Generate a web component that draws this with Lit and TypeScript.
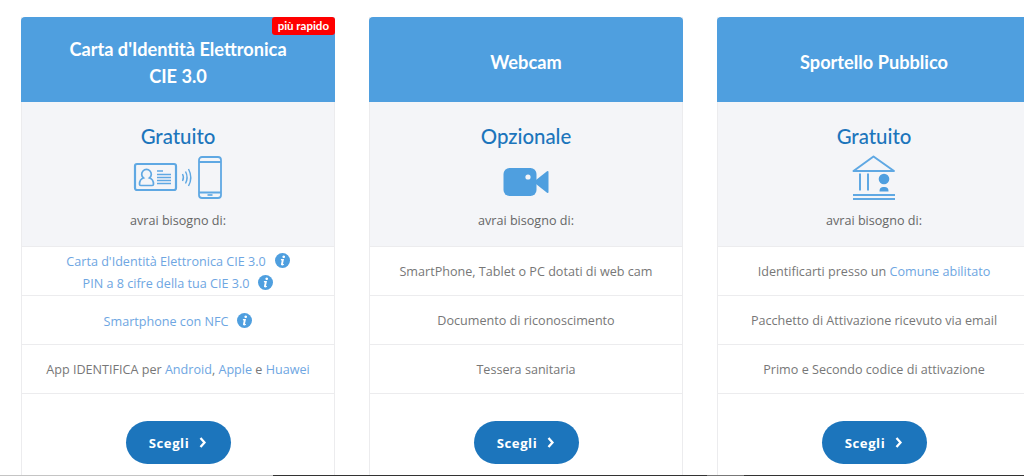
import { LitElement, html, css, svg } from "lit";
import { customElement } from "lit/decorators.js";

const info = html`<svg class="info" viewBox="0 0 16 16"><circle cx="8" cy="8" r="8" fill="#4f9fdf"/><path d="M9.300 2.600a1.400 1.400 0 1 1-.01 0zM6.300 6.500h3.300l-1.100 5c-.1.500.4.400 1.100 0l-.1 1.100c-1.300.9-3.400 1-3.100-.9l.8-3.700-.9-.3z" fill="#fff"/></svg>`;

const cieIcon = svg`<svg class="ic" width="90" height="46" viewBox="0 0 90 46" fill="none" stroke="#5fa8e3" stroke-width="1.800">
<rect x="2" y="9" width="41" height="26" rx="2" stroke-width="2.200"/>
<path d="M10.500 23a4.800 4.800 0 1 1 6 0c3.500 1 4 3.500 4 6.200 0 .8-.5 1.300-1.300 1.300H7.800c-.8 0-1.300-.5-1.300-1.300 0-2.700.5-5.200 4-6.200z" stroke-width="1.700"/>
<path d="M24 16h6M24 19.500h14M24 22.500h14M24 25.500h14M24 28.500h14" stroke-width="1.300"/>
<path d="M49.500 19c1.200 2.200 1.200 4.800 0 7M52.500 16.500c2 3.800 2 8.200 0 12M55.500 14c2.800 5.200 2.800 11.800 0 17" stroke-width="1.400"/>
<rect x="66" y="2" width="22" height="41" rx="3"/>
<path d="M66 7h22M66 37.500h22"/><path d="M74.500 40h5" stroke-width="1.700"/>
</svg>`;

const camIcon = svg`<svg class="ic" width="46" height="46" viewBox="0 0 46 46"><rect x="0.500" y="13" width="33" height="28" rx="6" fill="#4f9fdf"/><path d="M33 25L44 16.300Q45.500 15.500 45.500 17V37Q45.500 38.500 44 37.700L33 29z" fill="#4f9fdf"/><circle cx="25" cy="22" r="2.600" fill="#f4f5f8"/></svg>`;

const bankIcon = svg`<svg class="ic" width="44" height="46" viewBox="0 0 44 46" fill="none" stroke="#5fa8e3"><path d="M1.500 16L21.500 1.500 42 16z" stroke-width="2" stroke-linejoin="round"/><path d="M8 18.500v17M16 18.500v17" stroke-width="2"/><circle cx="32" cy="24" r="5.300" fill="#4f9fdf" stroke="none"/><path d="M27.500 36.500c0-3.500 1.500-4.500 4.500-4.500s4.500 1 4.500 4.500z" fill="#4f9fdf" stroke="none"/><path d="M1 40h42M1 44h42" stroke-width="2"/></svg>`;

interface Plan { title: unknown; badge?: boolean; price: string; icon: unknown; rows: unknown[]; }

const plans: Plan[] = [
  {
    title: html`Carta d'Identità Elettronica<br />CIE 3.0`,
    badge: true,
    price: "Gratuito",
    icon: cieIcon,
    rows: [
      html`<div class="stack"><div><a>Carta d'Identità Elettronica CIE 3.0</a>${info}</div><div><a>PIN a 8 cifre della tua CIE 3.0</a>${info}</div></div>`,
      html`<div class="stack"><div><a>Smartphone con NFC</a>${info}</div></div>`,
      html`App IDENTIFICA per <a>Android</a>, <a>Apple</a> e <a>Huawei</a>`,
    ],
  },
  {
    title: "Webcam",
    price: "Opzionale",
    icon: camIcon,
    rows: ["SmartPhone, Tablet o PC dotati di web cam", "Documento di riconoscimento", "Tessera sanitaria"],
  },
  {
    title: "Sportello Pubblico",
    price: "Gratuito",
    icon: bankIcon,
    rows: [
      html`Identificarti presso un <a>Comune abilitato</a>`,
      "Pacchetto di Attivazione ricevuto via email",
      "Primo e Secondo codice di attivazione",
    ],
  },
];

@customElement("app-root")
export class AppRoot extends LitElement {
  static styles = css`
    :host { display: block; position: relative; width: 1024px; height: 476px; overflow: hidden; background: #fff; font-family: "Open Sans", sans-serif; }
    .wrap { display: flex; gap: 34px; padding: 17px 0 0 21px; width: 1100px; height: 476px; box-sizing: border-box; }
    .card { position: relative; flex: 0 0 314px; box-sizing: border-box; height: 480px; border: solid #ececee; border-width: 0 1px; }
    .head { display: flex; align-items: center; justify-content: center; box-sizing: border-box; height: 85px; padding-top: 6px; margin: 0 -1px; background: #4f9fdf; border-radius: 4px 4px 0 0; color: #fff; font: 700 18.200px/27px Lato, sans-serif; text-align: center; }
    .badge { position: absolute; top: 0; right: -1px; height: 18px; padding: 0 6px; background: #f00; color: #fff; border-radius: 3px; font: 700 11.500px/18px Lato, sans-serif; }
    .top { display: flex; flex-direction: column; align-items: center; height: 145px; background: #f4f5f8; box-sizing: border-box; padding-top: 22px; border-bottom: 1px solid #ececee; }
    .price { color: #1c75bc; font: 500 20.400px/24px Lato, sans-serif; height: 31px; }
    .icbox { height: 46px; display: flex; align-items: center; justify-content: center; }
    .ic { display: block; }
    .need { margin-top: 11px; color: #666; font-size: 12.600px; line-height: 17px; }
    .row { display: flex; align-items: center; justify-content: center; height: 49px; border-bottom: 1px solid #ececee; box-sizing: border-box; color: #777; font-size: 12.600px; text-align: center; white-space: pre-wrap; }
    .row a { color: #6ea6e2; }
    .stack { display: flex; flex-direction: column; gap: 5px; line-height: 17px; padding-top: 2px; }
    .info { width: 15px; height: 15px; margin-left: 9px; vertical-align: -2px; }
    .foot { display: flex; justify-content: center; padding-top: 27px; }
    .btn { display: flex; align-items: center; justify-content: center; gap: 10px; width: 105px; height: 43px; border-radius: 22px; background: #1c75bc; color: #fff; font-weight: 700; font-size: 13.200px; letter-spacing: .5px; }
    .strip { position: absolute; left: 0; right: 0; top: 475px; height: 1px; display: flex; }
    .strip i { display: block; height: 1px; }
    .s1 { width: 273px; background: #c4c4c4; }
    .s2 { width: 434px; background: #333; }
    .s3 { width: 37px; background: #777; }
    .s4 { flex: 1; background: #333; }
  `;

  render() {
    return html`<div class="wrap">
      ${plans.map(
        (p) => html`<section class="card">
          <div class="head">${p.title}</div>
          ${p.badge ? html`<div class="badge">più rapido</div>` : ""}
          <div class="top">
            <div class="price">${p.price}</div>
            <div class="icbox">${p.icon}</div>
            <div class="need">avrai bisogno di:</div>
          </div>
          ${p.rows.map((r) => html`<div class="row">${r}</div>`)}
          <div class="foot">
            <div class="btn">Scegli
              <svg width="8" height="11" viewBox="0 0 8 11"><path d="M1.500 1l4 4.500-4 4.500" fill="none" stroke="#fff" stroke-width="2.300"/></svg>
            </div>
          </div>
        </section>`
      )}
    </div>
    <div class="strip"><i class="s1"></i><i class="s2"></i><i class="s3"></i><i class="s4"></i></div>`;
  }
}
